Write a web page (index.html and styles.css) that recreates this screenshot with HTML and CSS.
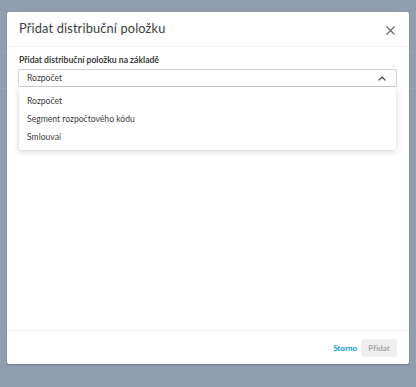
FILE: index.html
```html
<!DOCTYPE html>
<html>
<head>
<meta charset="utf-8">
<link rel="stylesheet" href="styles.css">
</head>
<body>
<div class="backdrop">
  <div class="bg-line bg-line-1"></div>
  <div class="bg-line bg-line-2"></div>
  <div class="modal">
    <div class="modal-header">
      <h1 class="title">Přidat distribuční položku</h1>
      <svg class="close" width="9" height="9" viewBox="0 0 9 9"><path d="M0.5 0.5L8.5 8.5M8.5 0.5L0.5 8.5" stroke="#666" stroke-width="1.1" fill="none"/></svg>
    </div>
    <div class="modal-body">
      <div class="label">Přidat distribuční položku na základě</div>
      <div class="select-wrap">
        <div class="select">
          <span>Rozpočet</span>
          <svg class="chevron" width="8" height="5" viewBox="0 0 8 5"><path d="M0.7 4.3L4 1L7.3 4.3" stroke="#333" stroke-width="1.2" fill="none"/></svg>
        </div>
        <ul class="menu">
          <li>Rozpočet</li>
          <li>Segment rozpočtového kódu</li>
          <li>Smlouvaí</li>
        </ul>
      </div>
    </div>
    <div class="modal-footer">
      <a class="btn-link">Storno</a>
      <button class="btn-primary" disabled>Přidat</button>
    </div>
  </div>
</div>
</body>
</html>
```
FILE: styles.css
```css
* { box-sizing: border-box; }
html, body { margin: 0; padding: 0; }
body {
  width: 416px;
  height: 387px;
  font-family: Lato, "Noto Sans", sans-serif;
  overflow: hidden;
}
.backdrop {
  position: relative;
  width: 416px;
  height: 387px;
  background: #909eb0;
  padding: 12px 7px 0 7px;
}
.bg-line {
  position: absolute;
  left: 0;
  right: 0;
  height: 1px;
  background: #98a5b6;
}
.bg-line-1 { top: 52px; }
.bg-line-2 { top: 88px; }
.modal {
  position: relative;
  width: 402px;
  height: 352px;
  background: #fff;
  border-radius: 2px;
  box-shadow: 0 1px 2px rgba(60,70,90,0.4);
  display: flex;
  flex-direction: column;
}
.modal-header {
  height: 35px;
  border-bottom: 1px solid #eceef0;
  display: flex;
  align-items: center;
  justify-content: space-between;
  padding: 0 14px 0 12px;
}
.title {
  margin: 0;
  font-size: 12.8px;
  font-weight: 400;
  color: #3c3c3c;
  letter-spacing: 0.15px;
  position: relative;
  top: -1px;
}
.close { margin-top: 2px; }
.modal-body {
  flex: 1;
  padding: 7px 12px 0 11px;
}
.label {
  font-size: 8.6px;
  font-weight: 700;
  color: #3c3c3c;
  height: 15px;
  line-height: 12px;
  padding-left: 1px;
}
.select-wrap { position: relative; }
.select {
  height: 18px;
  border: 1px solid #cfd3d7;
  border-radius: 2px;
  display: flex;
  align-items: center;
  justify-content: space-between;
  padding: 0 10px 0 8px;
  font-size: 8.6px;
  color: #3c3c3c;
}
.menu {
  position: absolute;
  top: 18px;
  left: 1px;
  right: 1px;
  margin: 0;
  padding: 5px 0 4px 0;
  list-style: none;
  background: #fff;
  border-radius: 0 0 2px 2px;
  box-shadow: 0 2px 6px rgba(40,50,70,0.18), 0 0 1px rgba(40,50,70,0.2);
}
.menu li {
  height: 18px;
  line-height: 18px;
  padding-left: 8px;
  font-size: 8.6px;
  color: #3c3c3c;
}
.modal-footer {
  height: 34px;
  border-top: 1px solid #eceef0;
  display: flex;
  align-items: center;
  justify-content: flex-end;
  padding: 0 12px 0 0;
  gap: 4px;
}
.btn-link {
  font-size: 8px;
  font-weight: 700;
  color: #0696d7;
}
.btn-primary {
  height: 18px;
  width: 36px;
  border: none;
  border-radius: 2px;
  background: #eeeeee;
  color: #a8a8a8;
  font-family: inherit;
  font-size: 8px;
  font-weight: 700;
  padding: 0;
}
```
